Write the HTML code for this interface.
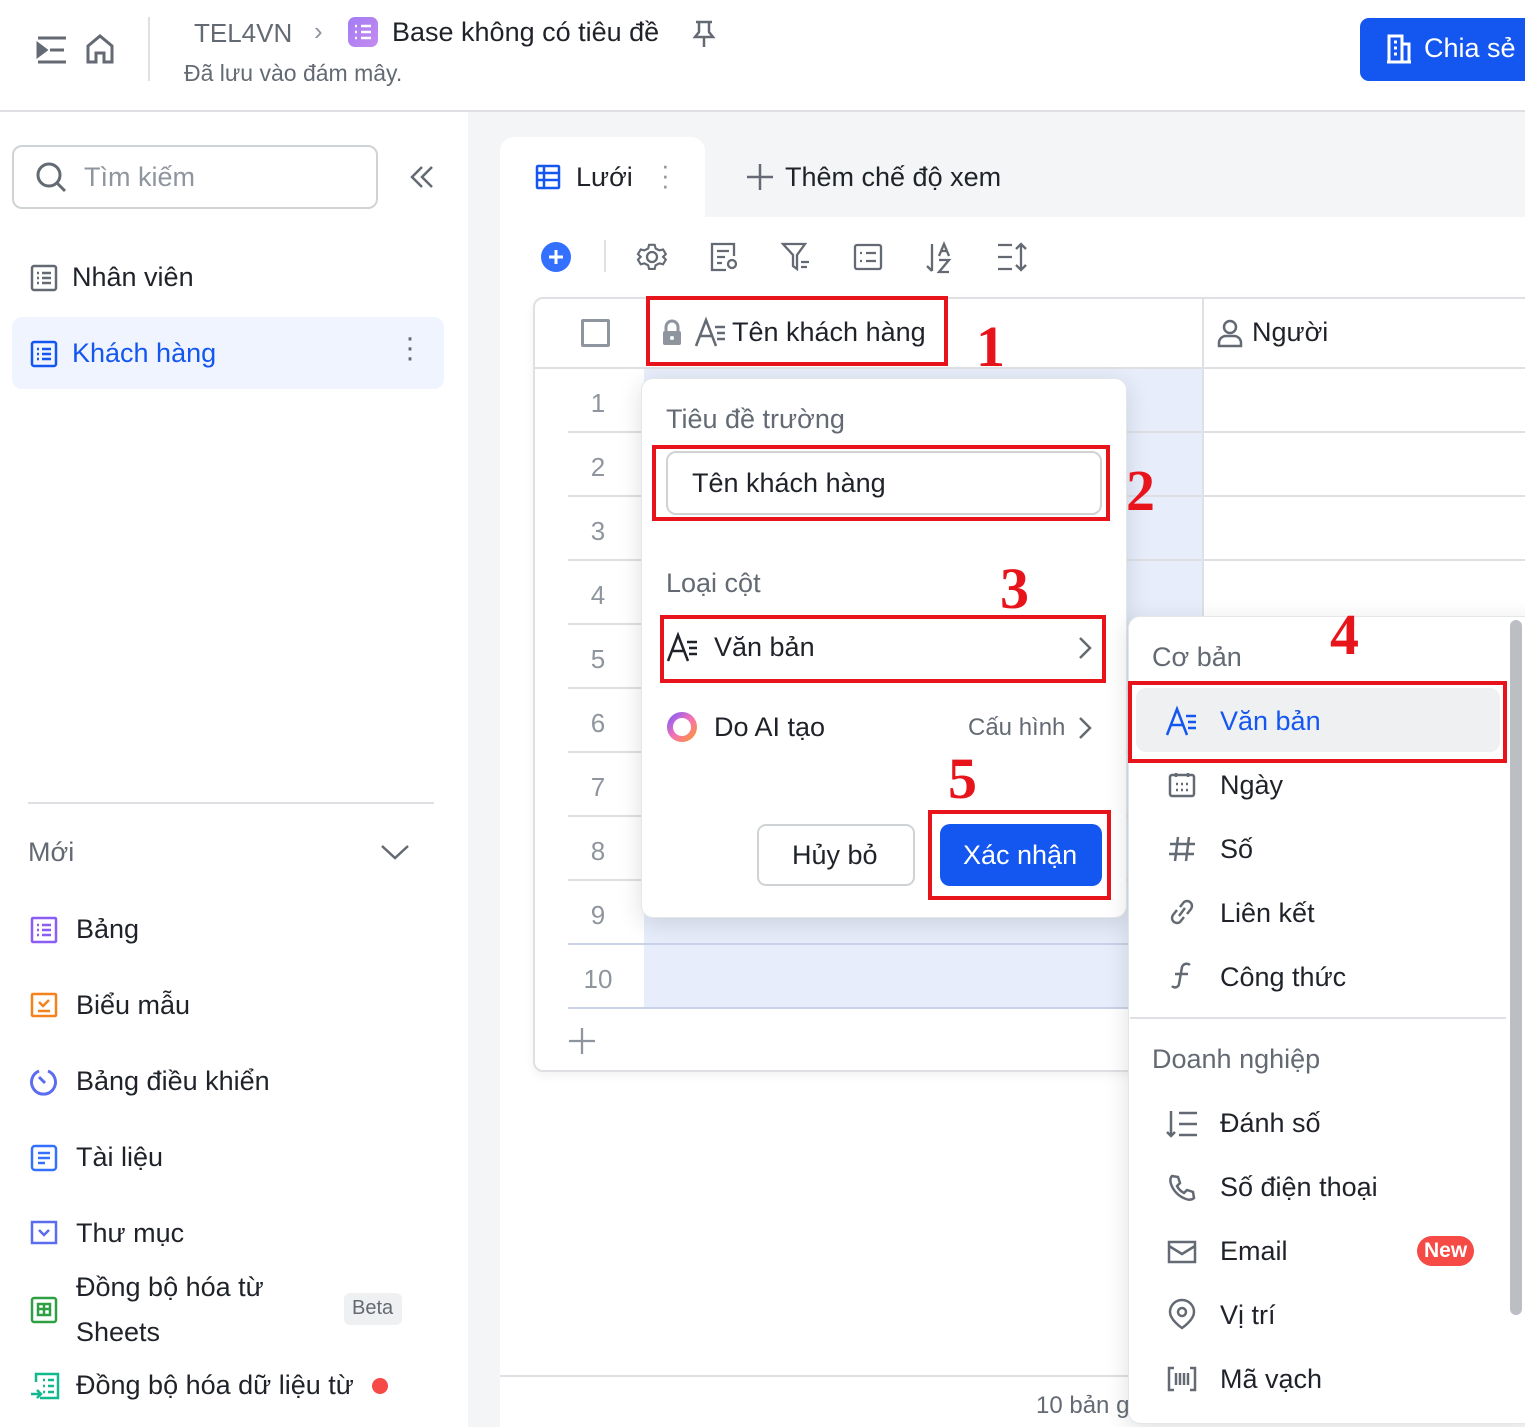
<!DOCTYPE html>
<html><head><meta charset="utf-8">
<style>
*{box-sizing:border-box;margin:0;padding:0}
html{width:1525px;height:1427px;overflow:hidden}
body{width:1525px;height:1427px;position:relative;overflow:hidden;background:#fff;font-family:"Liberation Sans","Noto Sans CJK SC",sans-serif;color:#1f2329}
.a{position:absolute}
.t{position:absolute;white-space:nowrap}
.red{position:absolute;border:4px solid #e8141c}
.num{position:absolute;font-family:"Liberation Serif",serif;font-weight:bold;color:#e8141c;font-size:58px;line-height:1}
svg{position:absolute;overflow:visible}
.rn{position:absolute;left:568px;width:60px;text-align:center;font-size:26px;color:#8f959e}
.hl{position:absolute;left:568px;width:957px;height:2px;background:#dee0e3}
.mi{position:absolute;left:1220px;font-size:27px;color:#1f2329}
.si{position:absolute;left:76px;font-size:27px;color:#1f2329}
</style></head><body>
<div class="a" style="left:0;top:110px;width:1525px;height:2px;background:#dee0e3"></div>
<svg style="left:36px;top:36px" width="32" height="28" viewBox="0 0 32 28" fill="none" stroke="#646a73" stroke-width="3"><path d="M2 2h28M14 14h14M2 26h28"/><path d="M2 8l8 6-8 6z" fill="#646a73"/></svg>
<svg style="left:86px;top:34px" width="28" height="30" viewBox="0 0 28 30" fill="none" stroke="#646a73" stroke-width="3"><path d="M2 12L14 2l12 10v16H18V19h-8v9H2z"/></svg>
<div class="a" style="left:148px;top:17px;width:2px;height:64px;background:#dee0e3"></div>
<div class="t" style="left:194px;top:18px;font-size:26px;color:#646a73">TEL4VN</div>
<div class="t" style="left:314px;top:16px;font-size:26px;color:#8f959e">›</div>
<div class="a" style="left:348px;top:17px;width:30px;height:30px;border-radius:7px;background:linear-gradient(135deg,#a27cf4,#c58af0)"></div>
<svg style="left:354px;top:24px" width="18" height="16" viewBox="0 0 18 16" stroke="#fff" stroke-width="2.4"><path d="M1 2h2M7 2h10M1 8h2M7 8h10M1 14h2M7 14h10"/></svg>
<div class="t" style="left:392px;top:17px;font-size:27px;color:#1f2329">Base không có tiêu đề</div>
<svg style="left:692px;top:20px" width="24" height="28" viewBox="0 0 24 28" fill="none" stroke="#646a73" stroke-width="2.5"><path d="M4 2h16M7 2v10l-4 5h18l-4-5V2M12 17v10"/></svg>
<div class="t" style="left:184px;top:60px;font-size:23px;color:#646a73">Đã lưu vào đám mây.</div>
<div class="a" style="left:1360px;top:18px;width:180px;height:63px;border-radius:9px;background:#1456f0"></div>
<svg style="left:1386px;top:34px" width="26" height="30" viewBox="0 0 26 30" fill="none" stroke="#fff" stroke-width="3"><path d="M3 28V2h13v26M16 10h7v18M1 28h24M8 8h3M8 14h3M8 20h3"/></svg>
<div class="t" style="left:1424px;top:33px;font-size:27px;color:#fff">Chia sẻ</div>

<div class="a" style="left:12px;top:145px;width:366px;height:64px;border:2px solid #d0d3d6;border-radius:10px"></div>
<svg style="left:36px;top:162px" width="32" height="32" viewBox="0 0 32 32" fill="none" stroke="#646a73" stroke-width="3"><circle cx="13" cy="13" r="11"/><path d="M21 21l8 8"/></svg>
<div class="t" style="left:84px;top:162px;font-size:27px;color:#8f959e">Tìm kiếm</div>
<svg style="left:410px;top:166px" width="24" height="22" viewBox="0 0 24 22" fill="none" stroke="#646a73" stroke-width="2.5"><path d="M12 1L2 11l10 10M22 1L12 11l10 10"/></svg>
<svg style="left:30px;top:264px" width="28" height="28" viewBox="0 0 28 28" fill="none" stroke="#646a73" stroke-width="2.5"><rect x="2" y="2" width="24" height="24" rx="2"/><path d="M7 9h2M12 9h9M7 14h2M12 14h9M7 19h2M12 19h9"/></svg>
<div class="si" style="left:72px;top:262px">Nhân viên</div>
<div class="a" style="left:12px;top:317px;width:432px;height:72px;border-radius:10px;background:#f0f4ff"></div>
<svg style="left:30px;top:340px" width="28" height="28" viewBox="0 0 28 28" fill="none" stroke="#1456f0" stroke-width="2.5"><rect x="2" y="2" width="24" height="24" rx="2"/><path d="M7 9h2M12 9h9M7 14h2M12 14h9M7 19h2M12 19h9"/></svg>
<div class="si" style="left:72px;top:338px;color:#1456f0">Khách hàng</div>
<div class="t" style="left:405px;top:333px;font-size:30px;color:#646a73;line-height:10px">·<br>·<br>·</div>
<div class="a" style="left:28px;top:802px;width:406px;height:2px;background:#dee0e3"></div>
<div class="t" style="left:28px;top:837px;font-size:27px;color:#646a73">Mới</div>
<svg style="left:381px;top:844px" width="28" height="16" viewBox="0 0 28 16" fill="none" stroke="#646a73" stroke-width="2.5"><path d="M1 2l13 12L27 2"/></svg>
<svg style="left:30px;top:916px" width="28" height="28" viewBox="0 0 28 28" fill="none" stroke="#8b5cf6" stroke-width="2.5"><rect x="2" y="2" width="24" height="24" rx="1"/><path d="M7 9h2M12 9h9M7 14h2M12 14h9M7 19h2M12 19h9"/></svg>
<div class="si" style="top:914px">Bảng</div>
<svg style="left:30px;top:992px" width="28" height="28" viewBox="0 0 28 28" fill="none" stroke="#f5821f" stroke-width="2.5"><rect x="2" y="2" width="24" height="22" rx="1"/><path d="M9 10l4 4 6-6M8 19h12"/></svg>
<div class="si" style="top:990px">Biểu mẫu</div>
<svg style="left:30px;top:1068px" width="28" height="28" viewBox="0 0 28 28" fill="none" stroke="#5b6cf0" stroke-width="3"><path d="M9 3A12 12 0 1 0 18 3"/><path d="M9 9l6 6"/></svg>
<div class="si" style="top:1066px">Bảng điều khiển</div>
<svg style="left:30px;top:1144px" width="28" height="28" viewBox="0 0 28 28" fill="none" stroke="#3370ff" stroke-width="2.5"><rect x="2" y="2" width="24" height="24" rx="3"/><path d="M8 9h12M8 14h12M8 19h7"/></svg>
<div class="si" style="top:1142px">Tài liệu</div>
<svg style="left:30px;top:1220px" width="28" height="26" viewBox="0 0 28 26" fill="none" stroke="#5b6cf0" stroke-width="2.5"><rect x="2" y="2" width="24" height="21"/><path d="M9 10l5 5 5-5"/></svg>
<div class="si" style="top:1218px">Thư mục</div>
<svg style="left:30px;top:1296px" width="28" height="28" viewBox="0 0 28 28" fill="none" stroke="#2ea043" stroke-width="2.5"><rect x="2" y="2" width="24" height="24" rx="2"/><rect x="8" y="8" width="12" height="11"/><path d="M14 8v11M8 13h12"/></svg>
<div class="si" style="top:1272px">Đồng bộ hóa từ</div>
<div class="si" style="top:1317px">Sheets</div>
<div class="a" style="left:344px;top:1293px;width:58px;height:32px;border-radius:6px;background:#eff0f1"></div>
<div class="t" style="left:352px;top:1297px;font-size:20px;color:#646a73">Beta</div>
<svg style="left:30px;top:1372px" width="30" height="28" viewBox="0 0 30 28" fill="none" stroke="#14b88f" stroke-width="2.5"><path d="M6 10V2h22v24H10"/><path d="M13 8h2M18 8h6M13 14h2M18 14h6M13 20h2M18 20h6M1 22h10M7 18l4 4-4 4"/></svg>
<div class="si" style="top:1370px">Đồng bộ hóa dữ liệu từ</div>
<div class="a" style="left:372px;top:1378px;width:16px;height:16px;border-radius:50%;background:#f54a45"></div>

<div class="a" style="left:468px;top:112px;width:1057px;height:1315px;background:#f4f5f7"></div>
<div class="a" style="left:500px;top:217px;width:1025px;height:1210px;background:#fff"></div>
<div class="a" style="left:500px;top:137px;width:205px;height:82px;background:#fff;border-radius:14px 14px 0 0"></div>
<svg style="left:535px;top:164px" width="26" height="26" viewBox="0 0 26 26" fill="none" stroke="#1456f0" stroke-width="2.5"><rect x="2" y="2" width="22" height="22" rx="1"/><path d="M2 9h22M2 16h22M9 2v22"/></svg>
<div class="t" style="left:576px;top:162px;font-size:27px">Lưới</div>
<div class="t" style="left:661px;top:160px;font-size:26px;color:#8f959e;line-height:10px">·<br>·<br>·</div>
<svg style="left:747px;top:164px" width="26" height="26" viewBox="0 0 26 26" stroke="#646a73" stroke-width="2.5"><path d="M13 0v26M0 13h26"/></svg>
<div class="t" style="left:785px;top:162px;font-size:27px">Thêm chế độ xem</div>
<div class="a" style="left:541px;top:242px;width:30px;height:30px;border-radius:50%;background:#3370ff"></div>
<svg style="left:549px;top:250px" width="14" height="14" viewBox="0 0 14 14" stroke="#fff" stroke-width="3"><path d="M7 0v14M0 7h14"/></svg>
<div class="a" style="left:604px;top:240px;width:2px;height:32px;background:#dee0e3"></div>
<svg style="left:637px;top:242px" width="30" height="30" viewBox="0 0 30 30" fill="none" stroke="#646a73" stroke-width="2.3"><path d="M12 2h6l1 4 4 2 4-1 3 5-3 3v0l3 3-3 5-4-1-4 2-1 4h-6l-1-4-4-2-4 1-3-5 3-3-3-3 3-5 4 1 4-2z" transform="scale(0.93) translate(1,1)"/><circle cx="15" cy="15" r="5"/></svg>
<svg style="left:710px;top:242px" width="30" height="30" viewBox="0 0 30 30" fill="none" stroke="#646a73" stroke-width="2.3"><path d="M16 28H2V2h22v12"/><path d="M7 9h12M7 15h8M7 21h5"/><circle cx="22" cy="22" r="4"/></svg>
<svg style="left:781px;top:242px" width="30" height="30" viewBox="0 0 30 30" fill="none" stroke="#646a73" stroke-width="2.3"><path d="M2 2h22l-8 11v14l-4-3V13z"/><path d="M20 20h8M20 25h6"/></svg>
<svg style="left:853px;top:243px" width="30" height="28" viewBox="0 0 30 28" fill="none" stroke="#646a73" stroke-width="2.3"><rect x="2" y="2" width="26" height="24" rx="2"/><path d="M7 10h2M13 10h10M7 18h2M13 18h10"/></svg>
<svg style="left:926px;top:242px" width="30" height="32" viewBox="0 0 30 32" fill="none" stroke="#646a73" stroke-width="2.3"><path d="M6 2v27M1 24l5 5"/><path d="M13 14l5-12 5 12M15 9h6M13 18h10l-10 12h10"/></svg>
<svg style="left:996px;top:242px" width="32" height="30" viewBox="0 0 32 30" fill="none" stroke="#646a73" stroke-width="2.3"><path d="M2 3h14M2 15h14M2 27h14M25 2v26M20 7l5-5 5 5M20 23l5 5 5-5"/></svg>
<div class="a" style="left:533px;top:297px;width:1010px;height:775px;border:2px solid #dee0e3;border-radius:10px;box-shadow:0 4px 10px rgba(0,0,0,.05);background:#fff"></div>
<div class="a" style="left:535px;top:367px;width:990px;height:2px;background:#dee0e3"></div>
<div class="a" style="left:1202px;top:299px;width:2px;height:320px;background:#dee0e3"></div>
<div class="a" style="left:644px;top:369px;width:558px;height:639px;background:#e7edfb"></div>
<div class="a" style="left:581px;top:319px;width:29px;height:28px;border:3px solid #8f959e;border-radius:2px"></div>
<svg style="left:662px;top:320px" width="20" height="26" viewBox="0 0 20 26"><path d="M4 11V7a6 6 0 0 1 12 0v4" fill="none" stroke="#8f959e" stroke-width="3"/><rect x="1" y="11" width="18" height="14" rx="2" fill="#8f959e"/><circle cx="10" cy="18" r="2" fill="#fff"/></svg>
<svg style="left:695px;top:319px" width="32" height="28" viewBox="0 0 32 28" fill="none" stroke="#646a73" stroke-width="2.5"><path d="M1 27L11 1l10 26M5 17h12M20 8h10M22 14h8M22 20h8"/></svg>
<div class="t" style="left:732px;top:317px;font-size:27px">Tên khách hàng</div>
<div class="red" style="left:646px;top:296px;width:302px;height:70px"></div>
<div class="num" style="left:976px;top:318px">1</div>
<svg style="left:1217px;top:319px" width="26" height="28" viewBox="0 0 26 28" fill="none" stroke="#646a73" stroke-width="2.5"><circle cx="13" cy="8" r="6"/><path d="M2 27v-3a7 7 0 0 1 7-7h8a7 7 0 0 1 7 7v3z"/></svg>
<div class="t" style="left:1252px;top:317px;font-size:27px">Người</div>
<div class="rn" style="top:388px">1</div>
<div class="rn" style="top:452px">2</div>
<div class="rn" style="top:516px">3</div>
<div class="rn" style="top:580px">4</div>
<div class="rn" style="top:644px">5</div>
<div class="rn" style="top:708px">6</div>
<div class="rn" style="top:772px">7</div>
<div class="rn" style="top:836px">8</div>
<div class="rn" style="top:900px">9</div>
<div class="rn" style="top:964px">10</div>
<div class="hl" style="top:431px"></div><div class="hl" style="top:495px"></div><div class="hl" style="top:559px"></div><div class="hl" style="top:623px"></div><div class="hl" style="top:687px"></div><div class="hl" style="top:751px"></div><div class="hl" style="top:815px"></div><div class="hl" style="top:879px"></div><div class="hl" style="top:943px;background:#c9d2e6"></div><div class="hl" style="top:1007px;background:#c9d2e6"></div>
<svg style="left:569px;top:1028px" width="26" height="26" viewBox="0 0 26 26" stroke="#8f959e" stroke-width="2.3"><path d="M13 0v26M0 13h26"/></svg>
<div class="a" style="left:500px;top:1375px;width:640px;height:2px;background:#dee0e3"></div>
<div class="t" style="left:1036px;top:1392px;font-size:24px;color:#646a73">10 bản g</div>

<div class="a" style="left:641px;top:378px;width:486px;height:540px;background:#fff;border-radius:12px;box-shadow:0 6px 24px rgba(31,35,41,.14);border:1px solid #e5e6e8"></div>
<div class="t" style="left:666px;top:404px;font-size:27px;color:#646a73">Tiêu đề trường</div>
<div class="a" style="left:666px;top:451px;width:436px;height:64px;border:2px solid #d0d3d6;border-radius:10px"></div>
<div class="t" style="left:692px;top:468px;font-size:27px">Tên khách hàng</div>
<div class="red" style="left:652px;top:445px;width:458px;height:76px"></div>
<div class="num" style="left:1126px;top:462px">2</div>
<div class="t" style="left:666px;top:568px;font-size:27px;color:#646a73">Loại cột</div>
<div class="num" style="left:1000px;top:560px">3</div>
<svg style="left:667px;top:634px" width="32" height="28" viewBox="0 0 32 28" fill="none" stroke="#1f2329" stroke-width="2.5"><path d="M1 27L11 1l10 26M5 17h12M20 8h10M22 14h8M22 20h8"/></svg>
<div class="t" style="left:714px;top:632px;font-size:27px">Văn bản</div>
<svg style="left:1078px;top:636px" width="14" height="24" viewBox="0 0 14 24" fill="none" stroke="#646a73" stroke-width="2.5"><path d="M2 2l10 10L2 22"/></svg>
<div class="red" style="left:660px;top:615px;width:446px;height:68px"></div>
<svg style="left:666px;top:711px" width="32" height="32" viewBox="0 0 32 32"><defs><linearGradient id="g" x1="0" y1="0" x2="1" y2="1"><stop offset="0" stop-color="#8b5cf6"/><stop offset=".5" stop-color="#f472b6"/><stop offset="1" stop-color="#fb923c"/></linearGradient></defs><circle cx="16" cy="16" r="12" fill="none" stroke="url(#g)" stroke-width="6"/></svg>
<div class="t" style="left:714px;top:712px;font-size:27px">Do AI tạo</div>
<div class="t" style="left:968px;top:714px;font-size:24px;color:#646a73">Cấu hình</div>
<svg style="left:1078px;top:716px" width="14" height="24" viewBox="0 0 14 24" fill="none" stroke="#646a73" stroke-width="2.5"><path d="M2 2l10 10L2 22"/></svg>
<div class="num" style="left:948px;top:750px">5</div>
<div class="a" style="left:757px;top:824px;width:158px;height:62px;border:2px solid #d0d3d6;border-radius:9px"></div>
<div class="t" style="left:792px;top:840px;font-size:27px">Hủy bỏ</div>
<div class="a" style="left:940px;top:824px;width:162px;height:62px;background:#1456f0;border-radius:10px"></div>
<div class="t" style="left:963px;top:840px;font-size:27px;color:#fff">Xác nhận</div>
<div class="red" style="left:928px;top:810px;width:183px;height:90px"></div>

<div class="a" style="left:1128px;top:616px;width:410px;height:808px;background:#fff;border-radius:12px;box-shadow:0 6px 24px rgba(31,35,41,.14);border:1px solid #e5e6e8"></div>
<div class="a" style="left:1510px;top:620px;width:12px;height:695px;background:#bbbfc4;border-radius:6px"></div>
<div class="t" style="left:1152px;top:642px;font-size:27px;color:#646a73">Cơ bản</div>
<div class="num" style="left:1330px;top:606px">4</div>
<div class="a" style="left:1136px;top:688px;width:364px;height:64px;background:#eff0f1;border-radius:10px"></div>
<svg style="left:1166px;top:708px" width="32" height="28" viewBox="0 0 32 28" fill="none" stroke="#1456f0" stroke-width="2.5"><path d="M1 27L11 1l10 26M5 17h12M20 8h10M22 14h8M22 20h8"/></svg>
<div class="mi" style="top:706px;color:#1456f0">Văn bản</div>
<div class="red" style="left:1128px;top:681px;width:379px;height:82px"></div>
<svg style="left:1168px;top:772px" width="28" height="26" viewBox="0 0 28 26" fill="none" stroke="#646a73" stroke-width="2.5"><rect x="2" y="3" width="24" height="21" rx="2"/><path d="M8 1v4M20 1v4M8 12h2M13 12h2M18 12h2M8 18h2M13 18h2M18 18h2"/></svg>
<div class="mi" style="top:770px">Ngày</div>
<svg style="left:1168px;top:836px" width="28" height="26" viewBox="0 0 28 26" fill="none" stroke="#646a73" stroke-width="2.5"><path d="M10 1L7 25M21 1l-3 24M2 8h25M1 18h25"/></svg>
<div class="mi" style="top:834px">Số</div>
<svg style="left:1169px;top:898px" width="26" height="28" viewBox="0 0 26 28" fill="none" stroke="#646a73" stroke-width="2.5"><path d="M11 9l4-5a5 5 0 0 1 7 7l-4 5M15 19l-4 5a5 5 0 0 1-7-7l4-5M10 18l6-8"/></svg>
<div class="mi" style="top:898px">Liên kết</div>
<svg style="left:1170px;top:962px" width="24" height="28" viewBox="0 0 24 28" fill="none" stroke="#646a73" stroke-width="2.5"><path d="M20 3a5 5 0 0 0-8 2l-3 17a4 4 0 0 1-7 2M5 12h13"/></svg>
<div class="mi" style="top:962px">Công thức</div>
<div class="a" style="left:1130px;top:1017px;width:376px;height:2px;background:#dee0e3"></div>
<div class="t" style="left:1152px;top:1044px;font-size:27px;color:#646a73">Doanh nghiệp</div>
<svg style="left:1166px;top:1110px" width="32" height="28" viewBox="0 0 32 28" fill="none" stroke="#646a73" stroke-width="2.5"><path d="M5 1v25M1 22l4 4 4-4M13 3h18M13 14h18M13 25h18"/></svg>
<div class="mi" style="top:1108px">Đánh số</div>
<svg style="left:1168px;top:1174px" width="28" height="28" viewBox="0 0 28 28" fill="none" stroke="#646a73" stroke-width="2.5"><path d="M4 2l6 1 2 6-3 3a16 16 0 0 0 7 7l3-3 6 2 1 6c-2 2-5 2-8 1A24 24 0 0 1 3 10C2 7 2 4 4 2z"/></svg>
<div class="mi" style="top:1172px">Số điện thoại</div>
<svg style="left:1167px;top:1240px" width="30" height="24" viewBox="0 0 30 24" fill="none" stroke="#646a73" stroke-width="2.5"><rect x="2" y="2" width="26" height="20"/><path d="M2 6l13 8 13-8"/></svg>
<div class="mi" style="top:1236px">Email</div>
<div class="a" style="left:1417px;top:1236px;width:57px;height:30px;border-radius:15px;background:#f54a45"></div>
<div class="t" style="left:1424px;top:1239px;font-size:21px;color:#fff;font-weight:bold">New</div>
<svg style="left:1168px;top:1300px" width="28" height="30" viewBox="0 0 28 30" fill="none" stroke="#646a73" stroke-width="2.5"><path d="M14 28s12-8 12-16A12 12 0 0 0 2 12c0 8 12 16 12 16z"/><circle cx="14" cy="12" r="4"/></svg>
<div class="mi" style="top:1300px">Vị trí</div>
<svg style="left:1167px;top:1366px" width="30" height="26" viewBox="0 0 30 26" fill="none" stroke="#646a73" stroke-width="2.5"><path d="M7 2H2v22h5M23 2h5v22h-5M9 7v12M13 7v12M17 7v12M21 7v12"/></svg>
<div class="mi" style="top:1364px">Mã vạch</div>
</body></html>
